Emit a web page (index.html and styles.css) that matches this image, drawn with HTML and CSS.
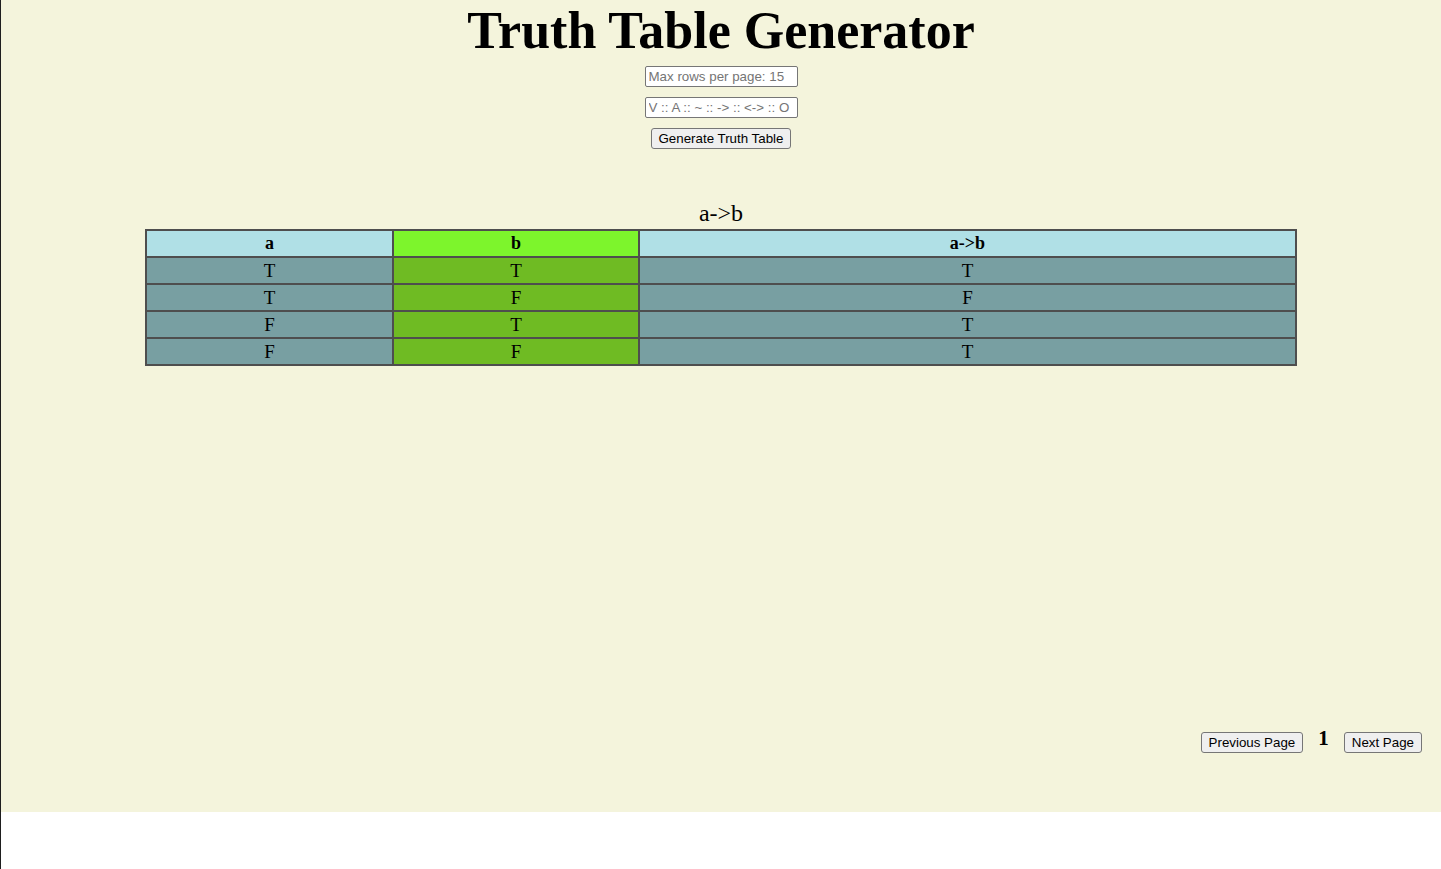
FILE: index.html
```html
<!DOCTYPE html>
<html>
<head>
<meta charset="utf-8">
<title>Truth Table Generator</title>
<link rel="stylesheet" href="styles.css">
</head>
<body>
<div class="app">
  <h1 class="title">Truth Table Generator</h1>
  <div class="controls">
    <input class="field" type="text" placeholder="Max rows per page: 15">
    <input class="field" type="text" placeholder="V :: A :: ~ :: -> :: <-> :: O">
    <button class="btn" type="button">Generate Truth Table</button>
  </div>
  <div class="result">
    <div class="expr">a-&gt;b</div>
    <table class="truth">
      <thead>
        <tr>
          <th class="col-a">a</th>
          <th class="col-b hl">b</th>
          <th class="col-r">a-&gt;b</th>
        </tr>
      </thead>
      <tbody>
        <tr><td>T</td><td class="hl">T</td><td>T</td></tr>
        <tr><td>T</td><td class="hl">F</td><td>F</td></tr>
        <tr><td>F</td><td class="hl">T</td><td>T</td></tr>
        <tr><td>F</td><td class="hl">F</td><td>T</td></tr>
      </tbody>
    </table>
  </div>
  <div class="pager">
    <button class="btn" type="button">Previous Page</button>
    <span class="page-num">1</span>
    <button class="btn" type="button">Next Page</button>
  </div>
</div>
</body>
</html>
```
FILE: styles.css
```css
html, body {
  margin: 0;
  padding: 0;
  background: #ffffff;
}
body {
  border-left: 1px solid #1e1e1e;
  min-height: 869px;
  box-sizing: border-box;
  font-family: "Liberation Serif", "Times New Roman", serif;
}
.app {
  background: #f4f4dc;
  min-height: 812px;
  box-sizing: border-box;
  display: flex;
  flex-direction: column;
  padding-bottom: 59px;
}
.title {
  margin: 0;
  text-align: center;
  font-size: 52px;
  font-weight: bold;
  line-height: 60px;
  padding-top: 1px;
  color: #000;
}
.controls {
  display: flex;
  flex-direction: column;
  align-items: center;
  gap: 10px;
  margin-top: 5px;
}
.field {
  width: 153px;
  height: 21px;
  box-sizing: border-box;
  border: 1px solid #767676;
  border-radius: 2px;
  background: #fff;
  padding: 1px 3px;
  font-family: "Liberation Sans", Arial, sans-serif;
  font-size: 13.33px;
}
.field::placeholder {
  color: #757575;
}
.btn {
  font-family: "Liberation Sans", Arial, sans-serif;
  font-size: 13.33px;
  height: 21px;
  padding: 1px 7px;
  border: 1px solid #767676;
  border-radius: 3px;
  background: #efefef;
  color: #000;
}
.result {
  margin-top: 50px;
  display: flex;
  flex-direction: column;
  align-items: center;
}
.expr {
  font-size: 24px;
  line-height: 28px;
  margin-bottom: 2px;
}
.truth {
  width: 1152px;
  border-collapse: collapse;
  border: 2px solid #4e4e4e;
  font-size: 19px;
}
.truth th, .truth td {
  border: 2px solid #4e4e4e;
  text-align: center;
  height: 25px;
  padding: 0;
  line-height: 25px;
}
.truth th {
  background: #b0e0e6;
  font-weight: bold;
  font-size: 18px;
}
.truth td {
  background: #789fa2;
}
.truth .col-a { width: 245px; }
.truth .col-b { width: 244px; }
.truth th.hl {
  background: #7df52c;
}
.truth td.hl {
  background: #6fbb23;
}
.pager {
  margin-top: auto;
  display: flex;
  justify-content: flex-end;
  align-items: flex-start;
  gap: 15px;
  padding-right: 19px;
}
.page-num {
  font-weight: bold;
  font-size: 21px;
  line-height: 12px;
}
```
